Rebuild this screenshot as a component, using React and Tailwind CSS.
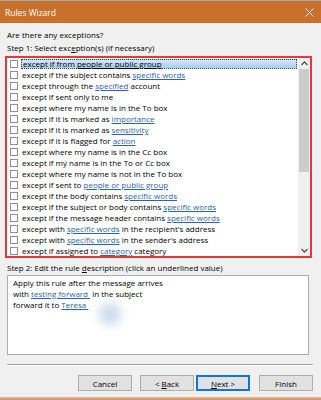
import React from "react";

const rows = [
  [["except if from "], ["people or public group", 1]],
  [["except if the subject contains "], ["specific words", 1]],
  [["except through the "], ["specified", 1], [" account"]],
  [["except if sent only to me"]],
  [["except where my name is in the To box"]],
  [["except if it is marked as "], ["importance", 1]],
  [["except if it is marked as "], ["sensitivity", 1]],
  [["except if it is flagged for "], ["action", 1]],
  [["except where my name is in the Cc box"]],
  [["except if my name is in the To or Cc box"]],
  [["except where my name is not in the To box"]],
  [["except if sent to "], ["people or public group", 1]],
  [["except if the body contains "], ["specific words", 1]],
  [["except if the subject or body contains "], ["specific words", 1]],
  [["except if the message header contains "], ["specific words", 1]],
  [["except with "], ["specific words", 1], [" in the recipient's address"]],
  [["except with "], ["specific words", 1], [" in the sender's address"]],
  [["except if assigned to "], ["category", 1], [" category"]],
];

function Row({ parts, selected }) {
  return (
    <div className="h-[11px] flex items-center">
      <div className="ml-[3px] w-[8px] h-[8px] border border-[#8f8f8f] bg-white shrink-0" />
      <div
        className={
          selected
            ? "ml-[3px] flex-1 h-[10px] flex items-center pl-[1px] border border-dotted border-[#444] bg-gradient-to-b from-[#d4e8f8] to-[#a5cdef]"
            : "ml-[4px] flex-1 h-[10px] flex items-center"
        }
      >
        <span className="whitespace-pre">
          {parts.map(([t, link], i) =>
            link ? (
              <span key={i} className={selected ? "underline text-black" : "underline text-[#2a64ad]"}>
                {t}
              </span>
            ) : (
              <span key={i}>{t}</span>
            )
          )}
        </span>
      </div>
    </div>
  );
}

function Chevron({ down }) {
  return (
    <svg width="7" height="5" viewBox="0 0 7 5">
      <path
        d={down ? "M0.5 1 L3.5 4 L6.5 1" : "M0.5 4 L3.5 1 L6.5 4"}
        fill="none"
        stroke="#555"
        strokeWidth="1.3"
      />
    </svg>
  );
}

function Btn({ children, primary }) {
  return (
    <div
      className={
        "w-[54px] h-[16px] flex items-center justify-center bg-[#e1e1e1] " +
        (primary ? "border-2 border-[#0a78d4]" : "border border-[#adadad]")
      }
    >
      {children}
    </div>
  );
}

export default function App() {
  return (
    <div
      className="w-[321px] h-[400px] bg-[#f0f0f0] flex flex-col text-[8px] leading-[11px] text-black overflow-hidden"
      style={{ fontFamily: '"Open Sans", "Liberation Sans", sans-serif' }}
    >
      <div className="h-[23px] shrink-0 bg-[#c8702c] border-t border-[#a8a8a8] flex items-center justify-between pl-[5px] pr-[7px]">
        <span className="text-white text-[8.5px]">Rules Wizard</span>
        <svg width="9" height="9" viewBox="0 0 9 9">
          <path d="M0.5 0.5 L8.5 8.5 M8.5 0.5 L0.5 8.5" stroke="#fff" strokeWidth="1" />
        </svg>
      </div>

      <div className="ml-[7px] mt-[6px]">Are there any exceptions?</div>
      <div className="ml-[7px] mt-[2px]">
        Step 1: Select exc<span className="underline">e</span>ption(s) (if necessary)
      </div>

      <div className="ml-[5px] mt-[3px] w-[307px] border-2 border-[#e4393c] bg-white flex">
        <div className="flex-1 flex flex-col">
          {rows.map((r, i) => (
            <Row key={i} parts={r} selected={i === 0} />
          ))}
        </div>
        <div className="w-[12px] ml-[1px] bg-[#f0f0f0] flex flex-col">
          <div className="h-[11px] flex items-center justify-center">
            <Chevron />
          </div>
          <div className="h-[103px] mx-[1px] bg-[#cdcdcd]" />
          <div className="flex-1" />
          <div className="h-[11px] flex items-center justify-center">
            <Chevron down />
          </div>
        </div>
      </div>

      <div className="ml-[7px] mt-[4px]">
        Step 2: Edit the rule <span className="underline">d</span>escription (click an underlined value)
      </div>
      <div className="relative ml-[7px] mt-[2px] w-[302px] h-[80px] bg-white border border-[#abadb3] pl-[5px] pt-[1px]">
        <div>Apply this rule after the message arrives</div>
        <div className="whitespace-pre">
          with <span className="underline text-[#2a64ad]">testing forward </span> in the subject
        </div>
        <div className="whitespace-pre">
          forward it to <span className="underline text-[#2a64ad]">Teresa </span>
        </div>
        <div className="absolute left-[82px] top-[24px] w-[40px] h-[28px] rounded-full bg-[radial-gradient(circle,#c3d2e8_0%,#e3ebf5_40%,rgba(255,255,255,0)_70%)] blur-[3px]" />
      </div>

      <div className="ml-[7px] mt-[9px] w-[306px] h-[2px] border-t border-[#a0a0a0] border-b border-b-white" />

      <div className="mt-[9px] flex justify-end pr-[8px]">
        <Btn>Cancel</Btn>
        <div className="w-[8px]" />
        <Btn>
          &lt; <span className="underline ml-[2px]">B</span>ack
        </Btn>
        <div className="w-[2px]" />
        <Btn primary>
          <span className="underline">N</span>ext &gt;
        </Btn>
        <div className="w-[9px]" />
        <Btn>Finish</Btn>
      </div>

      <div className="flex-1" />
      <div className="h-[3px] bg-gradient-to-b from-[#e9b893] to-[#d98c55]" />
    </div>
  );
}
